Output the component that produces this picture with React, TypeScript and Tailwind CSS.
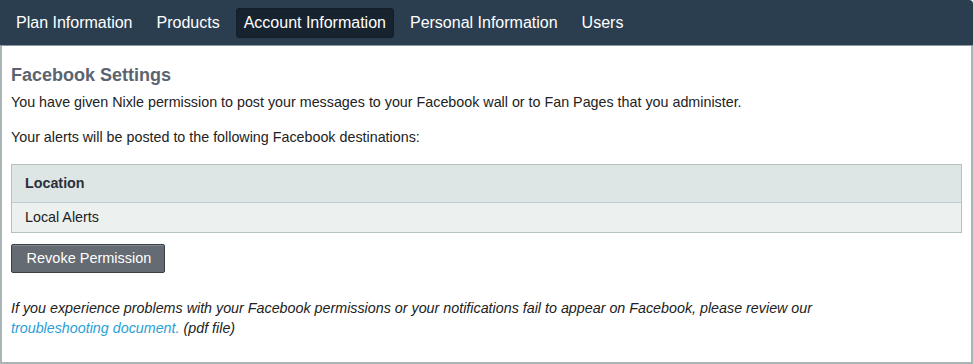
const tabs = ["Plan Information", "Products", "Account Information", "Personal Information", "Users"];

export default function App() {
  return (
    <div className="w-[973px] h-[364px] bg-white font-['Liberation_Sans',Arial,sans-serif] text-[#222]">
      <div className="h-[46px] bg-[#2b3e50] rounded-tr-[4px] flex items-center gap-2 px-2 border-b border-[#8a9aa3]">
        {tabs.map((t) => (
          <div
            key={t}
            className={
              t === "Account Information"
                ? "px-2 h-[30px] flex items-center rounded-[4px] bg-[#17232f] text-white text-[16px] shadow-[inset_0_0_2px_rgba(0,0,0,0.5)]"
                : "px-2 h-[30px] flex items-center text-white text-[16px]"
            }
          >
            {t}
          </div>
        ))}
      </div>
      <div className="h-[318px] border-x-2 border-b-2 border-[#a9b4b6] px-[9px] pt-[19px]">
        <h2 className="text-[18px] font-bold text-[#5b6370] leading-5">Facebook Settings</h2>
        <p className="text-[14.3px] leading-5 mt-[7px]">
          You have given Nixle permission to post your messages to your Facebook wall or to Fan Pages that you administer.
        </p>
        <p className="text-[14.3px] leading-5 mt-[15px]">Your alerts will be posted to the following Facebook destinations:</p>
        <div className="mt-[17px] border border-[#b6c1bf]">
          <div className="h-[38px] bg-[#dde6e4] border-b border-[#c3cdd0] flex items-center px-[13px] text-[14.3px] font-bold text-[#2b2f3a]">
            Location
          </div>
          <div className="h-[29px] bg-[#ecf0ef] flex items-center px-[13px] text-[14.3px]">Local Alerts</div>
        </div>
        <button className="mt-[11px] h-[29px] w-[154px] pl-[2px] bg-[#646b72] border border-[#3a3f44] rounded-[2px] text-white text-[14.5px] shadow-[inset_0_1px_0_rgba(255,255,255,0.2)]">
          Revoke Permission
        </button>
        <p className="mt-[25px] text-[14.3px] italic leading-5">
          If you experience problems with your Facebook permissions or your notifications fail to appear on Facebook, please review our
          <br />
          <span className="text-[#2a9fd6]">troubleshooting document.</span> (pdf file)
        </p>
      </div>
    </div>
  );
}
